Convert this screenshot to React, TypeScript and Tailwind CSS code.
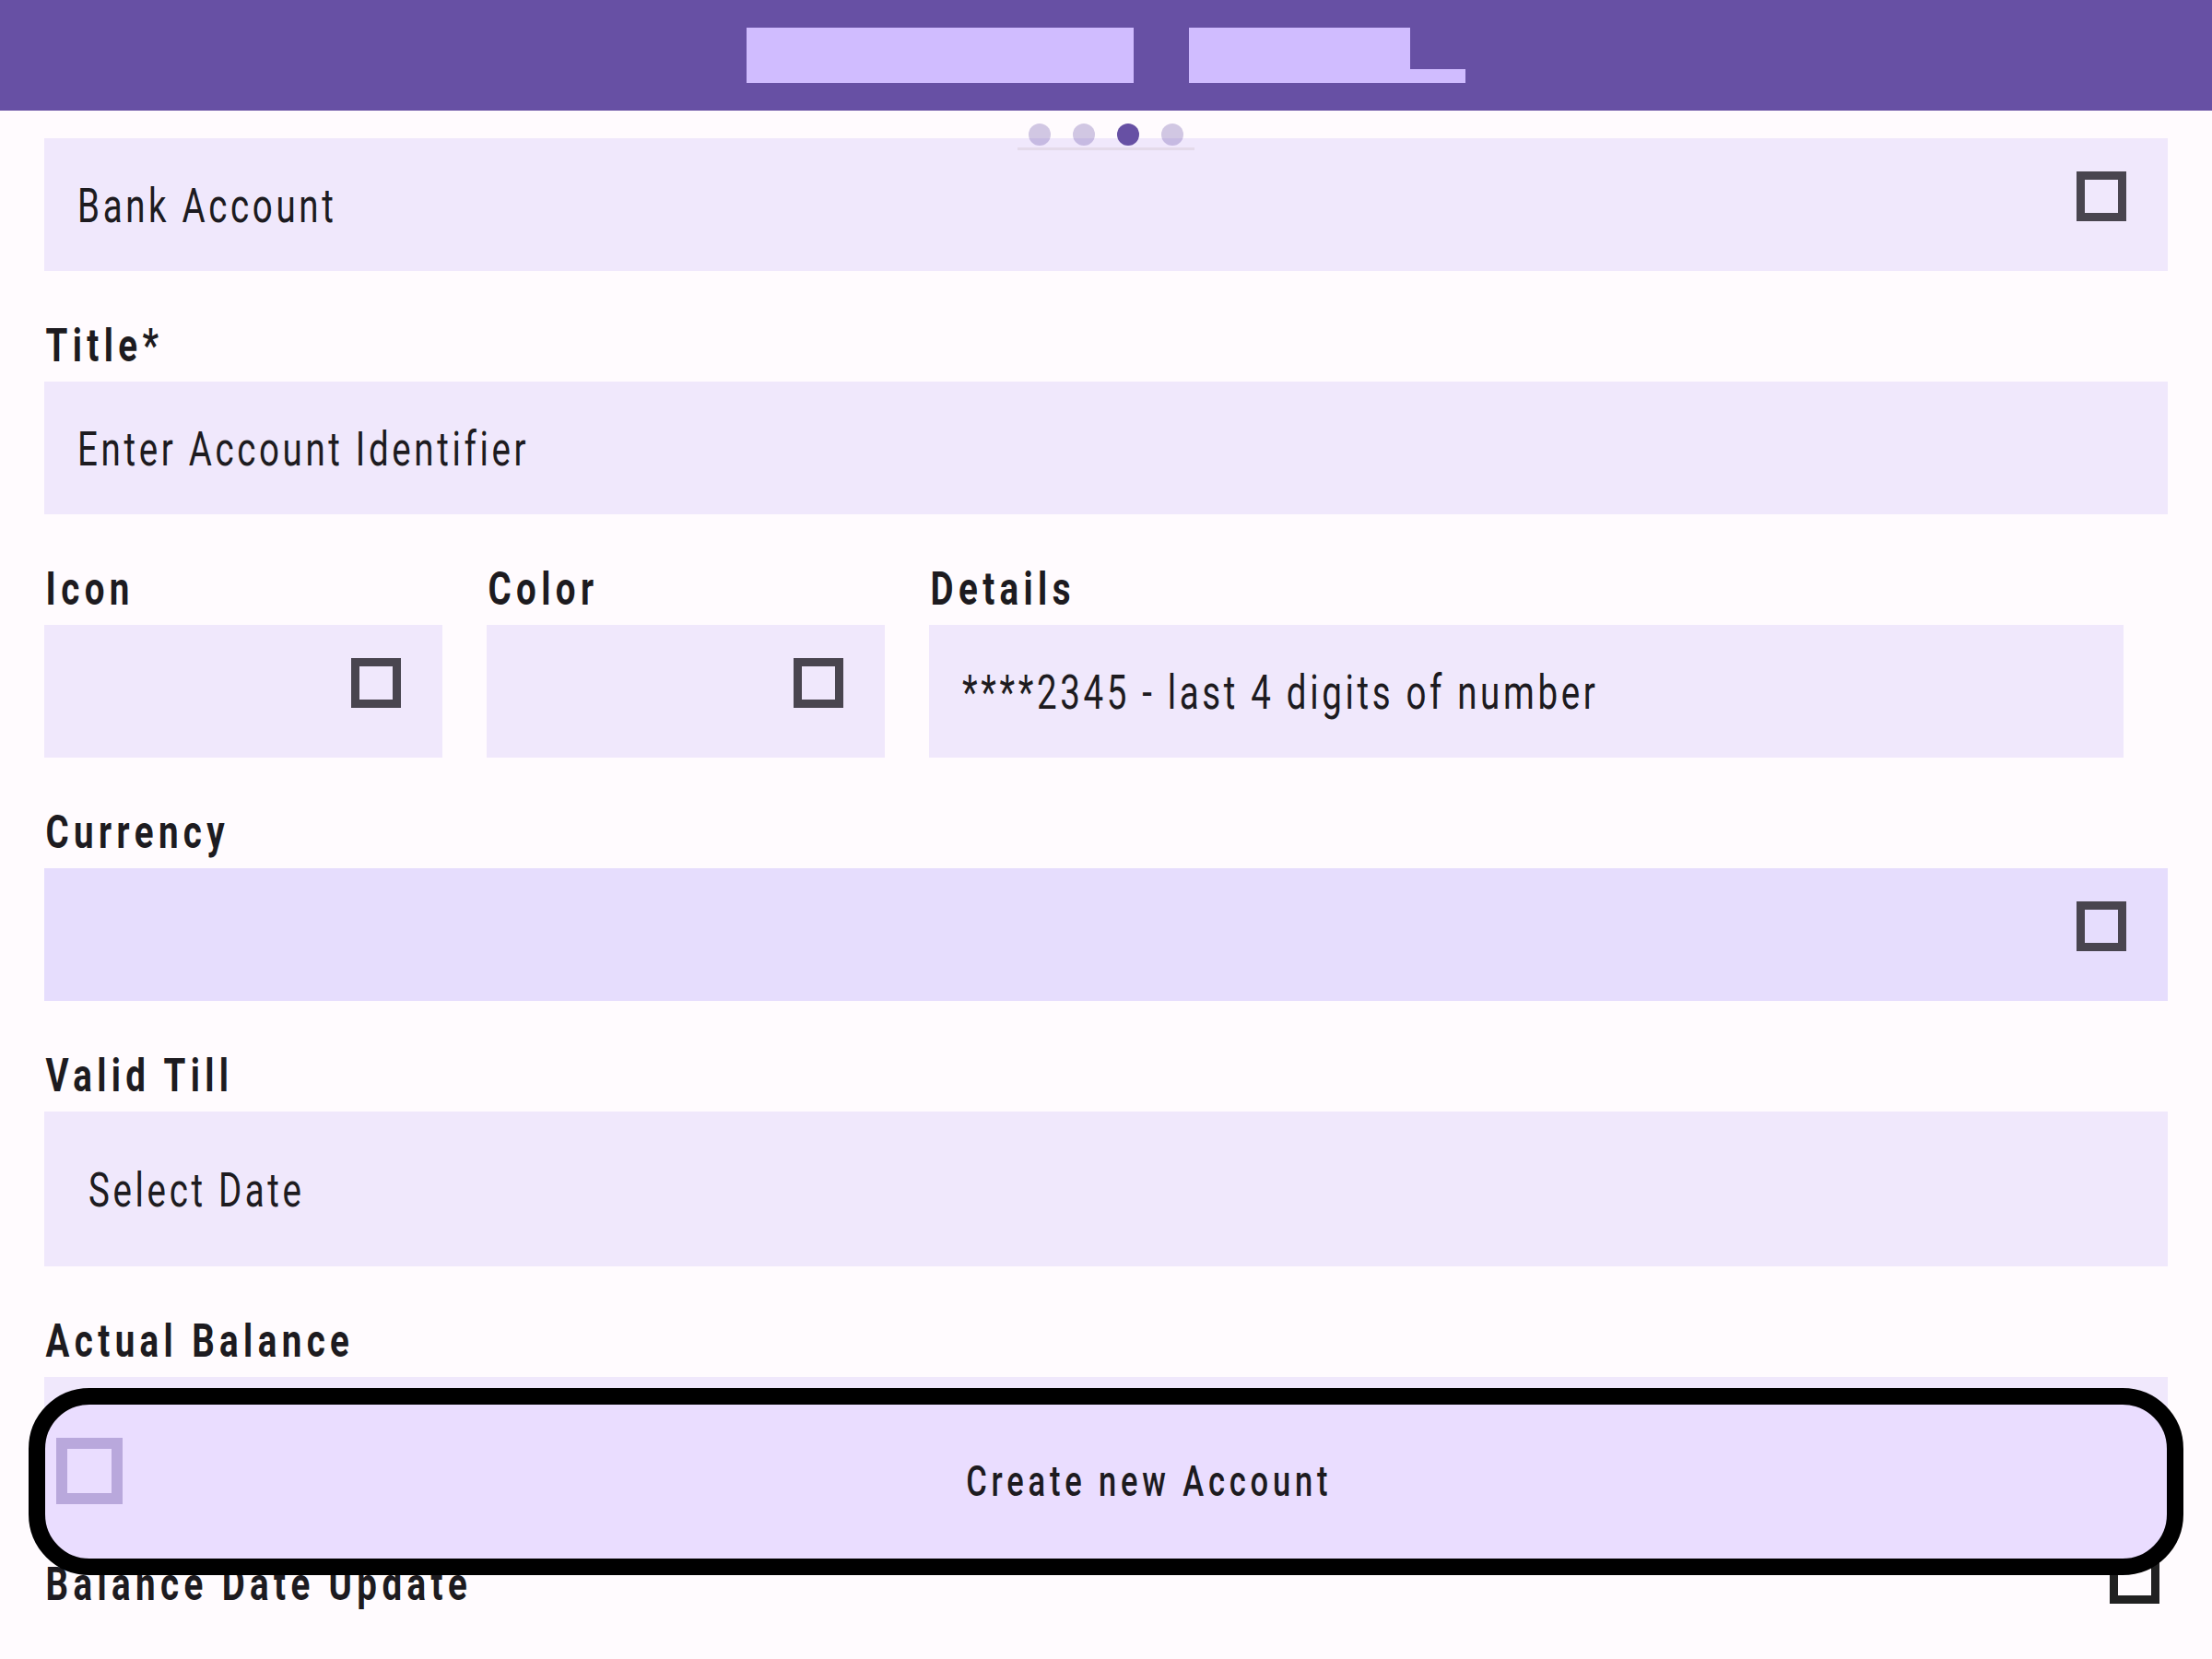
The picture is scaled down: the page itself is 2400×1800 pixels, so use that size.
import React from "react";

const FONT = "font-['Roboto','Liberation_Sans',sans-serif]";

function Txt({
  children,
  className = "",
}: {
  children: React.ReactNode;
  className?: string;
}) {
  return (
    <span className={`inline-block origin-left whitespace-nowrap ${className}`}>
      {children}
    </span>
  );
}

function Box({ className = "" }: { className?: string }) {
  return (
    <span
      className={`block h-[54px] w-[54px] shrink-0 border-[9px] border-[#49454F] ${className}`}
    />
  );
}

function Label({ children }: { children: React.ReactNode }) {
  return (
    <div className="mt-[52px] mb-[10px] h-[58px] text-[50px] leading-[58px] font-bold text-[#1D1B20]">
      <Txt className="scale-x-[0.77] tracking-[0.14em] pl-[2px]">{children}</Txt>
    </div>
  );
}

function Field({
  text,
  box = true,
  bg = "bg-[#F0E8FC]",
  h = "h-[144px]",
  pad = "pl-[36px]",
}: {
  text?: string;
  box?: boolean;
  bg?: string;
  h?: string;
  pad?: string;
}) {
  return (
    <div
      className={`flex ${h} items-center justify-between ${bg} ${pad} pr-[45px]`}
    >
      <div className="mt-[3px] text-[52px] leading-none text-[#1D1B20]">
        {text && (
          <Txt className="scale-x-[0.74] tracking-[0.095em]">{text}</Txt>
        )}
      </div>
      {box && <Box className="self-start mt-[36px]" />}
    </div>
  );
}

export default function App() {
  return (
    <div className={`relative min-h-[1800px] overflow-hidden bg-[#FFFBFE] ${FONT}`}>
      {/* Top bar */}
      <header className="flex h-[120px] items-start justify-center gap-[60px] bg-[#6750A4] pt-[30px]">
        <div className="h-[60px] w-[420px] bg-[#D0BCFF]" />
        <div className="flex items-end">
          <div className="h-[60px] w-[240px] bg-[#D0BCFF]" />
          <div className="h-[15px] w-[60px] bg-[#D0BCFF]" />
        </div>
      </header>

      {/* Page indicator */}
      <div className="absolute left-[1104px] top-[134px] flex w-[192px] flex-col items-center">
        <div className="flex gap-[24px]">
          <span className="h-[24px] w-[24px] rounded-full bg-[#6750A4]/30" />
          <span className="h-[24px] w-[24px] rounded-full bg-[#6750A4]/30" />
          <span className="h-[24px] w-[24px] rounded-full bg-[#6750A4]" />
          <span className="h-[24px] w-[24px] rounded-full bg-[#6750A4]/30" />
        </div>
        <div className="mt-[2px] h-[3px] w-[192px] bg-[#E4DAEA]" />
      </div>

      <main className="px-[48px] pt-[30px]">
        <Field text="Bank Account" />

        <Label>Title*</Label>
        <Field text="Enter Account Identifier" box={false} />

        <div className="grid grid-cols-[432px_432px_1296px] gap-x-[48px]">
          <div>
            <Label>Icon</Label>
            <Field pad="pl-0" />
          </div>
          <div>
            <Label>Color</Label>
            <Field pad="pl-0" />
          </div>
          <div>
            <Label>Details</Label>
            <Field text="****2345 - last 4 digits of number" box={false} />
          </div>
        </div>

        <Label>Currency</Label>
        <Field bg="bg-[#E6DDFD]" />

        <Label>Valid Till</Label>
        <Field text="Select Date" box={false} h="h-[168px]" pad="pl-[48px]" />

        <Label>Actual Balance</Label>
        <Field box={false} />

        <div className="flex items-start justify-between">
          <Label>Balance Date Update</Label>
          <span className="mt-[48px] mr-[9px] block h-[54px] w-[54px] border-[9px] border-[#212121]" />
        </div>
      </main>

      {/* Floating action */}
      <button className="absolute left-[31px] right-[31px] top-[1506px] flex h-[203px] items-start rounded-[66px] border-[18px] border-black bg-[#EADDFF]">
        <span className="ml-[12px] mt-[36px] block h-[72px] w-[72px] shrink-0 border-[12px] border-[#B9A8DC]" />
        <span className="flex h-full flex-1 items-center justify-center pl-[10px] text-[46px] font-medium text-[#1D1B20]">
          <span className="inline-block origin-center scale-x-[0.75] tracking-[0.14em] whitespace-nowrap">
            Create new Account
          </span>
        </span>
      </button>
    </div>
  );
}
